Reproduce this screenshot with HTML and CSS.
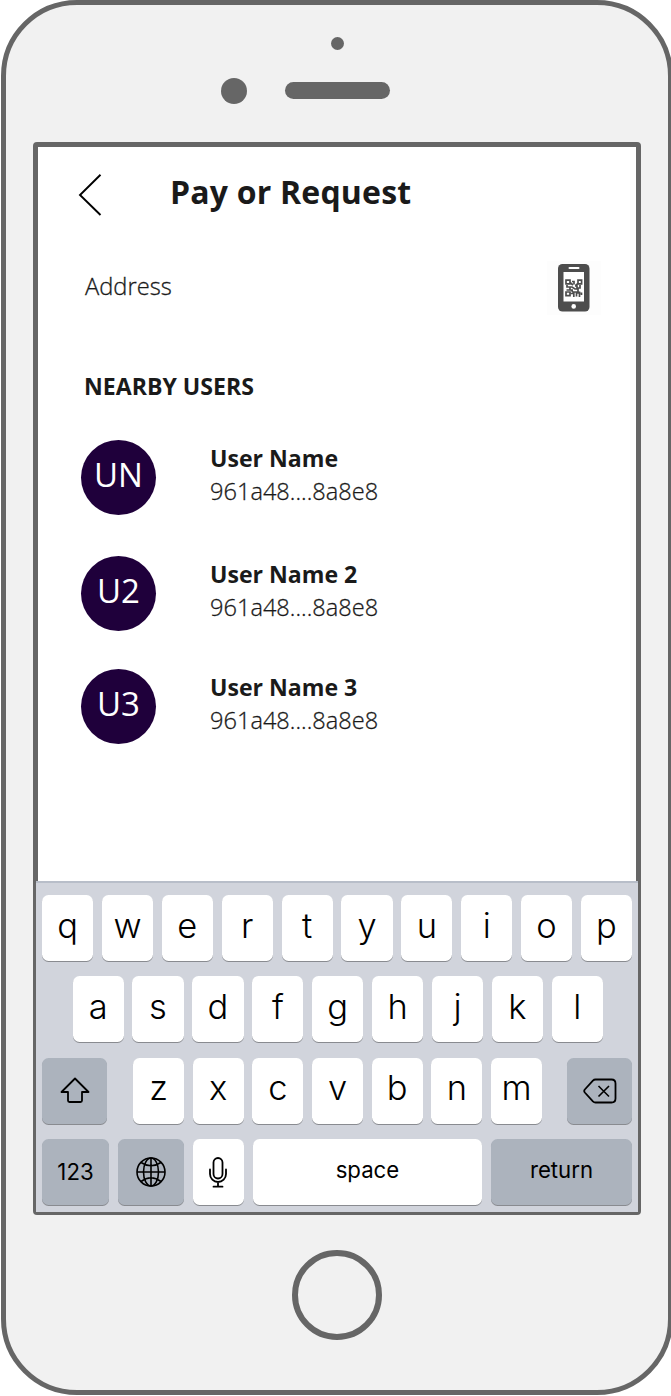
FILE: index.html
```html
<!DOCTYPE html>
<html lang="en">
<head>
<meta charset="utf-8">
<title>Pay or Request</title>
<link rel="stylesheet" href="styles.css">
</head>
<body>
<div class="phone">
  <div class="top-bezel">
    <span class="sensor"></span>
    <div class="speaker-row"><span class="camera"></span><span class="speaker"></span></div>
  </div>
  <main class="screen">
    <div class="content">
      <header class="header">
        <svg class="back" width="24" height="42" viewBox="0 0 24 42"><path d="M22.500 .8 2 21 22.500 41" fill="none" stroke="#000" stroke-width="1.900"/></svg>
        <h1>Pay or Request</h1>
      </header>
      <div class="address">
        <span class="light">Address</span>
        <div class="scan">
          <svg width="32" height="48" viewBox="0 0 32 48">
            <rect width="31.500" height="47.500" rx="4.500" fill="#4d4d4d"/>
            <rect x="10.500" y="3" width="11" height="2" rx="1" fill="#fff"/>
            <rect x="5.500" y="8" width="20.500" height="29.500" fill="#fff"/>
            <circle cx="15.700" cy="42.400" r="2.300" fill="#fff"/>
            <g fill="none" stroke="#4d4d4d" stroke-width="1.700">
              <path d="M8 16.200h4v3.600H8zM20 16.200h3.600v3.600H20zM8 28h4v3.600H8z"/>
              <path d="M12 18.500l3 2.500M14 17.500h2v3M20 19.500l-2.500 2M9 21v2h3v3h3M22 21v3h-3v-2h-2M11 23h3l3 2h3v3h-5l-2-2M8.500 26h4M12.500 29.500h2.500M15.800 28v5M18.500 27.500v5M18.500 29h4M21.500 27.500v5.500M23.500 28.500v2.500"/>
            </g>
          </svg>
        </div>
      </div>
      <h2>NEARBY USERS</h2>
      <ul class="users">
        <li><span class="avatar">UN</span><div><b>User Name</b><span class="light">961a48....8a8e8</span></div></li>
        <li><span class="avatar">U2</span><div><b>User Name 2</b><span class="light">961a48....8a8e8</span></div></li>
        <li><span class="avatar">U3</span><div><b>User Name 3</b><span class="light">961a48....8a8e8</span></div></li>
      </ul>
    </div>
    <div class="keyboard">
      <div class="row"><span class="key">q</span><span class="key">w</span><span class="key">e</span><span class="key">r</span><span class="key">t</span><span class="key">y</span><span class="key">u</span><span class="key">i</span><span class="key">o</span><span class="key">p</span></div>
      <div class="row home"><span class="key">a</span><span class="key">s</span><span class="key">d</span><span class="key">f</span><span class="key">g</span><span class="key">h</span><span class="key">j</span><span class="key">k</span><span class="key">l</span></div>
      <div class="row lower">
        <span class="key dark side"><svg width="30" height="27" viewBox="0 0 30 27"><path d="M15 1.500 1.500 15H8v8.500Q8 25 9.500 25h11q1.500 0 1.500-1.500V15h6.500z" fill="none" stroke="#000" stroke-width="1.800" stroke-linejoin="round"/></svg></span>
        <div class="letters"><span class="key">z</span><span class="key">x</span><span class="key">c</span><span class="key">v</span><span class="key">b</span><span class="key">n</span><span class="key">m</span></div>
        <span class="key dark side"><svg width="34" height="26" viewBox="0 0 34 26"><path d="M12.500 1.500H28.500Q32.500 1.500 32.500 5.500v15q0 4-4 4h-16q-1.500 0-2.600-1.100L1.800 14.500q-1.200-1.500 0-3L9.900 2.600Q11 1.500 12.500 1.500z" fill="none" stroke="#000" stroke-width="1.800" stroke-linejoin="round"/><path d="m15.500 8 10.500 10.500M26 8 15.500 18.500" stroke="#000" stroke-width="1.600"/></svg></span>
      </div>
      <div class="row bottom">
        <span class="key dark label num">123</span>
        <span class="key dark globe"><svg width="30" height="30" viewBox="0 0 30 30" fill="none" stroke="#000" stroke-width="1.600"><circle cx="15" cy="15" r="14"/><ellipse cx="15" cy="15" rx="7.500" ry="14"/><path d="M15 1v28M1 15h28M5 5.500q10 6.500 20 0M5 24.500q10-7.500 20 0"/></svg></span>
        <span class="key mic"><svg width="18" height="31" viewBox="0 0 18 31" fill="none" stroke="#000" stroke-width="1.800" stroke-linecap="round"><rect x="4.500" y="1" width="9" height="20.500" rx="4.500"/><path d="M1 12.500v4.500a8 8 0 0 0 16 0v-4.500M9 25v4.500M4.500 29.700h9"/></svg></span>
        <span class="key label space">space</span>
        <span class="key dark label return">return</span>
      </div>
    </div>
  </main>
  <div class="bottom-bezel"><span class="home-button"></span></div>
</div>
</body>
</html>
```
FILE: styles.css
```css
* { box-sizing: border-box; }
html, body { margin: 0; overflow: hidden; background: #fff; }
body { height: 1396px; font-family: "Open Sans", "Noto Sans", sans-serif; color: #1a1a1a; }
.phone {
  width: 672px; height: 1395px; margin-left: 1px;
  border: 5px solid #666; border-radius: 76px; background: #f1f1f1;
  padding-left: 27px; display: flex; flex-direction: column;
}
.top-bezel { height: 137px; padding-top: 32px; width: 609px; display: flex; flex-direction: column; align-items: center; }
.sensor { width: 13px; height: 13px; border-radius: 50%; background: #666; }
.speaker-row { display: flex; align-items: center; gap: 38px; margin-top: 28px; width: 233px; }
.camera { width: 26px; height: 26px; border-radius: 50%; background: #666; }
.speaker { width: 105px; height: 17px; border-radius: 9px; background: #666; margin-top: -1px; }
.screen {
  width: 608px; height: 1073px; background: #fff; border: 5px solid #666; border-bottom-width: 3px;
  border-radius: 4px; flex: none;
}
.content { height: 734px; padding: 0 36px 0 43px; }
.header { display: flex; align-items: flex-start; padding-top: 27px; height: 112px; }
.back { margin-left: -3px; flex: none; }
h1 { margin: -4px 0 0 68px; font-size: 32px; line-height: 44px; font-weight: 700; letter-spacing: .2px; white-space: nowrap; }
.address { display: flex; justify-content: space-between; align-items: flex-start; height: 112px; font-size: 23.700px; line-height: 33px; padding-left: 4px; }
.address > span { padding-top: 11px; }
.scan { width: 54px; height: 54px; background: #fdfdfd; display: flex; align-items: center; justify-content: center; margin-top: 2px; margin-right: -1px; }
.light { font-weight: 300; -webkit-text-stroke: .3px #1a1a1a; }
h2 { margin: -1px 0 0 3px; font-size: 23.100px; line-height: 32px; font-weight: 680; }
.users { list-style: none; margin: 38px 0 0; padding: 0; display: flex; flex-direction: column; gap: 41px; }
.users li { display: flex; gap: 54px; height: 75px; }
.users li:last-child { margin-top: -3px; }
.users li > div { display: flex; flex-direction: column; font-size: 23.600px; line-height: 33px; padding-top: 2px; }
.users b { font-size: 23.100px; font-weight: 680; }
.avatar { width: 75px; height: 75px; border-radius: 50%; background: #1f003b; color: #fff; font-size: 33px; line-height: 69px; text-align: center; }

.keyboard {
  margin: 0 -2px; height: 331px; background: #d1d4dc; border-top: 2px solid #b8bec9;
  padding: 12px 6px 0 6px; display: flex; flex-direction: column; gap: 15.400px;
  font-family: Inter, "Liberation Sans", sans-serif; color: #000;
}
.row { display: flex; gap: 8.700px; height: 66px; flex: none; }
.home { padding: 0 29px 0 30.500px; }
.lower { justify-content: space-between; }
.letters { display: flex; gap: 8.700px; width: 409px; }
.lower .letters { margin-left: 1px; }
.key {
  flex: 1 1 0; min-width: 0; height: 66px; background: #fff; border-radius: 6.500px;
  box-shadow: 0 1px 0 #898b90; display: flex; align-items: center; justify-content: center;
  font-size: 34.500px; line-height: 60px; padding-bottom: 5px; font-weight: 350;
}
.dark { background: #acb3bd; padding-bottom: 0; }
.side { flex: 0 0 65px; }
.label { font-size: 22.200px; font-weight: 400; }
.bottom .num { flex: 0 0 67px; }
.bottom .globe { flex: 0 0 66.500px; }
.bottom .mic { flex: 0 0 51px; padding: 0; }
.bottom .space { padding-bottom: 4px; }
.bottom .return { flex: 0 0 141px; padding-bottom: 4px; }
.bottom-bezel { width: 607px; display: flex; justify-content: center; padding-top: 35px; }
.home-button { width: 90px; height: 90px; border: 6px solid #666; border-radius: 50%; }
```
